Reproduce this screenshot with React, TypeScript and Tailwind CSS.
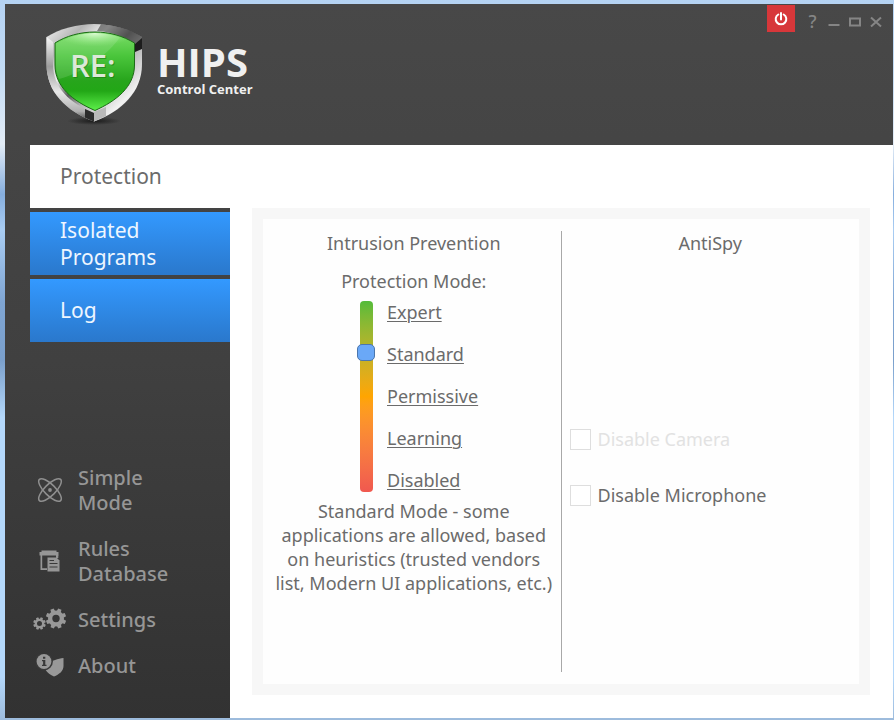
import React, { useState } from 'react';

const modes = ['Expert', 'Standard', 'Permissive', 'Learning', 'Disabled'];

const tabs = ['Protection', 'Isolated Programs', 'Log'];

const ShieldLogo = () => (
  <svg width="104" height="106" viewBox="42 20 104 106" role="img" aria-label="RE:">
    <defs>
      <linearGradient id="steel" x1="0" y1="0" x2="1" y2="1">
        <stop offset="0" stopColor="#f4f4f4" />
        <stop offset="0.2" stopColor="#b5b5b5" />
        <stop offset="0.34" stopColor="#f0f0f0" />
        <stop offset="0.48" stopColor="#5c5c5c" />
        <stop offset="0.6" stopColor="#b8b8b8" />
        <stop offset="0.8" stopColor="#f2f2f2" />
        <stop offset="1" stopColor="#999999" />
      </linearGradient>
      <linearGradient id="steelSide" x1="0" y1="0" x2="0" y2="1">
        <stop offset="0" stopColor="#f7f7f7" />
        <stop offset="0.35" stopColor="#9c9c9c" />
        <stop offset="0.65" stopColor="#e8e8e8" />
        <stop offset="0.88" stopColor="#b0b0b0" />
        <stop offset="1" stopColor="#3a3a3a" />
      </linearGradient>
      <linearGradient id="green" x1="0" y1="0" x2="0" y2="1">
        <stop offset="0" stopColor="#7bdd68" />
        <stop offset="0.3" stopColor="#4bc63c" />
        <stop offset="0.62" stopColor="#27a51c" />
        <stop offset="0.75" stopColor="#22a716" />
        <stop offset="1" stopColor="#5df04a" />
      </linearGradient>
      <radialGradient id="shine" cx="0.5" cy="0" r="0.5">
        <stop offset="0" stopColor="#e8ffe0" stopOpacity="0.9" />
        <stop offset="1" stopColor="#9cf08c" stopOpacity="0" />
      </radialGradient>
      <radialGradient id="floor">
        <stop offset="0" stopColor="#161616" stopOpacity="0.9" />
        <stop offset="1" stopColor="#161616" stopOpacity="0" />
      </radialGradient>
    </defs>
    <ellipse cx="94" cy="121" rx="27" ry="4" fill="url(#floor)" />
    <path d="M94 24C78 24 59 29 46.500 37V64C46.500 92 66 111 94 121.500C122 111 142 92 142 64V37C129 29 111 24 94 24Z" fill="url(#steel)" />
    <path d="M46.500 37V64C46.500 92 66 111 94 121.500V113C70 103 53 88 53 64V42Z" fill="url(#steelSide)" />
    <path d="M101 24.200C117 25.500 131 30 142 37V47L134 43C124 36 112 32 97 31Z" fill="#4b4b4b" opacity="0.65" />
    <path d="M135 44L142 38V49L135 52Z" fill="#1d1d1d" />
    <path d="M94 112L106 107V116L94 121.500Z" fill="#b9b9b9" />
    <path d="M94 113L85 109V117.500L94 121.500Z" fill="#2c2c2c" />
    <path d="M95 32C80 32 66 36 55 43V65C55 87 73 101 95 110.500C116 101 134.500 87 134.500 65V43C123 36 110 32 95 32Z" fill="url(#green)" stroke="#1c6b16" strokeWidth="1" />
    <path d="M95 33C81 33 68 36.500 56 43.500V65C56 70 57 75 59 79C78 74 103 60 120 37.500C112 34.500 104 33 95 33Z" fill="#ffffff" opacity="0.12" />
    <path d="M95 33C81 33 68 36.500 56 43.500V60H133V43.500C122 36.500 109 33 95 33Z" fill="url(#shine)" />
    <text x="71" y="78" fontFamily="'Open Sans', sans-serif" fontSize="31" fontWeight="600" fill="#17691180">RE:</text>
    <text x="70" y="77" fontFamily="'Open Sans', sans-serif" fontSize="31" fontWeight="600" fill="#dce8d8">RE:</text>
  </svg>
);

const AtomIcon = () => (
  <svg width="26" height="26" viewBox="0 0 26 26" fill="none" stroke="#8f8f8f" strokeWidth="1.500">
    <ellipse cx="13" cy="13" rx="15" ry="5.500" transform="rotate(45 13 13)" />
    <ellipse cx="13" cy="13" rx="15" ry="5.500" transform="rotate(-45 13 13)" />
    <circle cx="13" cy="13" r="1.900" fill="#8f8f8f" stroke="none" />
  </svg>
);

const RulesIcon = () => (
  <svg width="22" height="22" viewBox="0 0 22 22" fill="#969696">
    <path d="M2.500 0.500H17.500V2H19.500V5.500H0.500V2H2.500Z" />
    <path d="M1.500 5H3.200V18.300H8V20H1.500Z" />
    <path d="M17 5H19.300V8H17Z" />
    <path d="M8.500 7.500H17.500L20.500 10.500V21.500H8.500Z" />
    <path d="M10.500 10.500H15M10.500 13.500H18.500M10.500 17H18.500" stroke="#3a3a3a" strokeWidth="1.200" />
  </svg>
);

interface GearProps {
  cx: number;
  cy: number;
  r: number;
  hole: number;
  tooth: number;
}

const Gear: React.FC<GearProps> = ({ cx, cy, r, hole, tooth }) => (
  <g transform={`translate(${cx} ${cy})`}>
    <circle r={(r + hole) / 2} fill="none" stroke="#989898" strokeWidth={r - hole} />
    {[22, 67, 112, 157, 202, 247, 292, 337].map((angle) => (
      <path
        key={angle}
        d={`M${-tooth} ${-r + 1.5}L${-tooth * 0.8} ${-r - tooth}H${tooth * 0.8}L${tooth} ${-r + 1.5}Z`}
        fill="#989898"
        transform={`rotate(${angle})`}
      />
    ))}
  </g>
);

const GearsIcon = () => (
  <svg width="34" height="24" viewBox="0 0 34 24">
    <Gear cx={6.500} cy={15.500} r={4.800} hole={2.500} tooth={1.500} />
    <Gear cx={23} cy={10.500} r={8} hole={3.700} tooth={2.200} />
  </svg>
);

const AboutIcon = () => (
  <svg width="28" height="24" viewBox="0 0 28 24">
    <path d="M11 8C16 8 22 4 27.500 4V12C27.500 17 23 20.500 18 22.500C14.500 21 11.500 19 9 15Z" fill="#989898" />
    <circle cx="8" cy="7.500" r="8.900" fill="#393939" />
    <circle cx="8" cy="7.500" r="7.400" fill="#989898" />
    <path d="M7 2.700H9.300V4.700H7ZM6 6H9.300V10.800H10.500V12H6V10.800H7.100V7.200H6Z" fill="#383838" />
  </svg>
);

const links = [
  { label: 'Simple Mode', icon: <AtomIcon /> },
  { label: 'Rules Database', icon: <RulesIcon /> },
  { label: 'Settings', icon: <GearsIcon /> },
  { label: 'About', icon: <AboutIcon /> },
];

const WindowControls = () => (
  <div className="flex items-start pt-px pr-[7px]">
    <button aria-label="Turn protection off" className="mr-[7px] flex h-[27px] w-7 items-center justify-center bg-[#d7373a]">
      <svg width="14" height="14" viewBox="0 0 14 14" fill="none" stroke="#ffffff" strokeWidth="2" strokeLinecap="round">
        <path d="M4.300 2.500A5.300 5.300 0 1 0 9.700 2.500" />
        <path d="M7 1V7.500" />
      </svg>
    </button>
    <button aria-label="Help" className="flex h-[31px] w-[21px] items-center justify-center text-lg leading-none font-medium text-[#858585]">
      ?
    </button>
    <button aria-label="Minimize" className="flex h-[31px] w-[21px] items-center justify-center">
      <svg width="12" height="12" viewBox="0 0 12 12" fill="none" stroke="#858585" strokeWidth="2">
        <path d="M0.500 10H11.500" />
      </svg>
    </button>
    <button aria-label="Maximize" className="flex h-[33px] w-[21px] items-center justify-center">
      <svg width="12" height="10" viewBox="0 0 12 10" fill="none" stroke="#858585" strokeWidth="2">
        <rect x="1" y="1.500" width="10" height="7" />
      </svg>
    </button>
    <button aria-label="Close" className="flex h-[33px] w-[21px] items-center justify-center">
      <svg width="12" height="12" viewBox="0 0 12 12" fill="none" stroke="#858585" strokeWidth="2">
        <path d="M1 1.500L11 10.500M11 1.500L1 10.500" />
      </svg>
    </button>
  </div>
);

export default function App() {
  const [activeTab, setActiveTab] = useState('Protection');
  const [mode, setMode] = useState(1);
  const [microphoneOff, setMicrophoneOff] = useState(false);

  return (
    <div className="flex min-h-screen flex-col bg-[linear-gradient(to_bottom,#b5d3f3,#c3dcf5_10%,#e3ecf6_20%,#86aede_27%,#a9cdf3_32%,#7fa5d3_42%,#7a9fcb_50%,#b4d8fb_58%,#b4d8fb_94%,#9dbbdc)] pt-1 pr-px pb-[2px] pl-[5px] font-['Noto_Sans',sans-serif] text-[#6b6b6b]">
      <div className="flex flex-1 flex-col bg-linear-to-b from-[#484848] via-[#404040] to-[#323232]">
        <header className="flex h-[141px] items-start justify-between">
          <div className="flex items-start pt-4 pl-[37px]">
            <ShieldLogo />
            <div className="pt-[22px] pl-[11px] font-['Open_Sans',sans-serif] font-bold text-[#f0f0f0]">
              <h1 className="text-[40px] leading-10">HIPS</h1>
              <p className="text-[13px] leading-[14px]">Control Center</p>
            </div>
          </div>
          <WindowControls />
        </header>

        <div className="flex flex-1">
          <aside className="flex w-[225px] shrink-0 flex-col">
            <nav className="flex flex-col gap-1 pl-[25px]">
              {tabs.map((tab) => (
                <button
                  key={tab}
                  onClick={() => setActiveTab(tab)}
                  className={`h-[63px] pr-12 pl-[30px] text-left text-[21px] leading-[27px]
                    ${activeTab === tab ? 'bg-white text-[#6b6b6b]' : 'bg-linear-to-b from-[#3399ff] to-[#2a78cc] text-[#eef6ff]'}
                  `}
                >
                  {tab}
                </button>
              ))}
            </nav>
            <nav className="mt-auto flex flex-col gap-[21px] pb-10 pl-7">
              {links.map((link) => (
                <a key={link.label} href="#" className="flex items-center gap-[11px] text-xl leading-[25px] font-medium text-[#969696]">
                  <span className="flex w-[34px] shrink-0 justify-center">{link.icon}</span>
                  <span className="w-24">{link.label}</span>
                </a>
              ))}
            </nav>
          </aside>

          <main className="flex flex-1 bg-white pt-[63px] pr-[23px] pb-[23px] pl-[22px]">
            <div className="flex flex-1 border-[11px] border-[#f7f7f7] bg-[#fefefe] py-3 text-lg leading-6">
              <section className="flex flex-1 basis-0 flex-col border-r border-[#a8a8a8] pr-1 pl-2">
                <h2 className="text-center">Intrusion Prevention</h2>
                <label htmlFor="mode" className="mt-[14px] text-center">
                  Protection Mode:
                </label>
                <div className="flex items-center gap-3 pl-[86px]">
                  <input
                    id="mode"
                    type="range"
                    min={0}
                    max={4}
                    value={mode}
                    onChange={(e) => setMode(Number(e.target.value))}
                    className="h-[191px] w-[18px] appearance-none bg-transparent [writing-mode:vertical-lr] [&::-webkit-slider-runnable-track]:w-[13px] [&::-webkit-slider-runnable-track]:rounded [&::-webkit-slider-runnable-track]:bg-linear-to-b [&::-webkit-slider-runnable-track]:from-[#52bb3a] [&::-webkit-slider-runnable-track]:via-[#ffa500] [&::-webkit-slider-runnable-track]:to-[#f0584f] [&::-webkit-slider-thumb]:-ml-[3px] [&::-webkit-slider-thumb]:h-[17px] [&::-webkit-slider-thumb]:w-[18px] [&::-webkit-slider-thumb]:appearance-none [&::-webkit-slider-thumb]:rounded-[5px] [&::-webkit-slider-thumb]:border [&::-webkit-slider-thumb]:border-[#4b76ad] [&::-webkit-slider-thumb]:bg-[#6aa8f7]"
                  />
                  <div className="flex flex-col items-start gap-1">
                    {modes.map((name, index) => (
                      <a
                        key={name}
                        href="#"
                        onClick={() => setMode(index)}
                        className="flex h-[38px] items-center underline decoration-1 underline-offset-2"
                      >
                        {name}
                      </a>
                    ))}
                  </div>
                </div>
                <p className="px-0.5 text-center">
                  Standard Mode - some applications are allowed, based on heuristics (trusted vendors list, Modern UI applications, etc.)
                </p>
              </section>

              <section className="flex flex-1 basis-0 flex-col pr-1 pl-2">
                <h2 className="pr-1 text-center">AntiSpy</h2>
                <div className="mt-[172px] flex flex-col gap-8">
                  <label className="flex items-center gap-[7px] text-[#e2e2e2]">
                    <input type="checkbox" disabled className="size-[21px] appearance-none border border-[#dedede] bg-white" />
                    Disable Camera
                  </label>
                  <label className="flex items-center gap-[7px]">
                    <input
                      type="checkbox"
                      checked={microphoneOff}
                      onChange={(e) => setMicrophoneOff(e.target.checked)}
                      className="size-[21px] appearance-none border border-[#dedede] bg-white checked:bg-[#6aa8f7]"
                    />
                    Disable Microphone
                  </label>
                </div>
              </section>
            </div>
          </main>
        </div>
      </div>
    </div>
  );
}
